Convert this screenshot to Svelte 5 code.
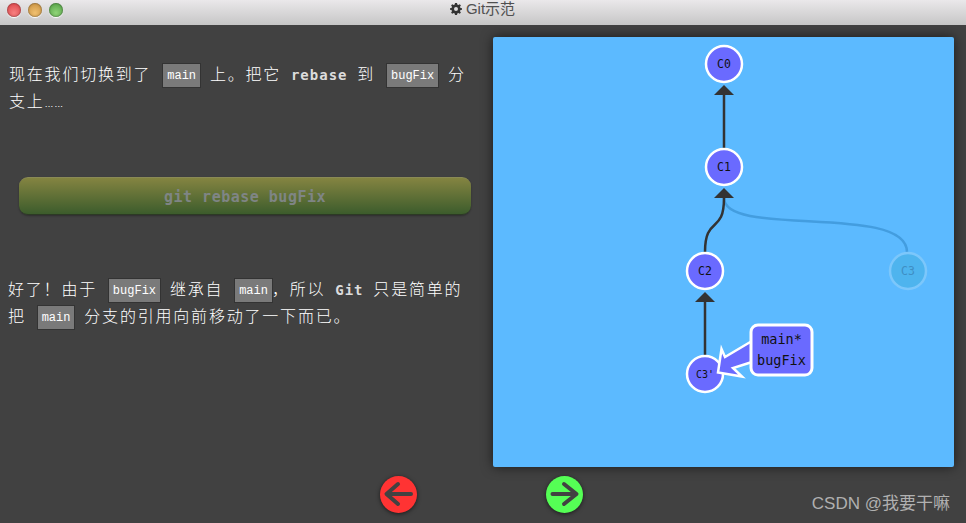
<script>
  const nodes = [
    { id: 'C0', x: 724, y: 64, cls: 'label' },
    { id: 'C1', x: 724, y: 167, cls: 'label' },
    { id: 'C2', x: 705, y: 271, cls: 'label' },
    { id: "C3'", x: 705, y: 374, cls: 'label small' }
  ];
</script>

<div class="window">
  <header class="titlebar">
    <div class="lights">
      <span class="light red"></span>
      <span class="light amber"></span>
      <span class="light green"></span>
    </div>
    <div class="title">
      <svg class="gear" viewBox="0 0 12 12" width="12" height="12" aria-hidden="true">
        <path fill="#333" fill-rule="evenodd" d="M5 0h2l.3 1.6 1.1.5L9.8 1.2l1.1 1.2-.9 1.3.5 1.2 1.5.3v1.6l-1.5.3-.5 1.2.9 1.3-1.1 1.2-1.4-.9-1.1.5L7 12H5l-.3-1.6-1.1-.5-1.4.9-1.1-1.2.9-1.3-.5-1.2L0 6.8V5.2l1.5-.3.5-1.2-.9-1.3 1.1-1.2 1.4.9 1.1-.5zM6 4a2 2 0 1 0 0 4 2 2 0 0 0 0-4z"/>
      </svg>
      <span>Git示范</span>
    </div>
  </header>

  <main class="content">
    <section class="instructions">
      <p class="para first">现在我们切换到了 <code>main</code> 上。把它 <strong>rebase</strong> 到 <code>bugFix</code> 分支上<span class="dots">……</span></p>
      <div class="command">git rebase bugFix</div>
      <p class="para second">好了！由于 <code>bugFix</code> 继承自 <code>main</code>，所以 <strong>Git</strong> 只是简单的把 <code>main</code> 分支的引用向前移动了一下而已。</p>
    </section>

    <section class="canvas">
      <svg viewBox="493 37 461 430" width="461" height="430" role="img" aria-label="Git 提交树">
        <path class="edge" d="M724 95V149" />
        <path class="head" d="M724 85 734 95H714Z" />
        <g class="ghost">
          <path class="edge faded" d="M907 252C907 203 724 238 724 198" />
          <circle class="node" cx="908" cy="271" r="18" />
          <text class="label" x="908" y="275">C3</text>
        </g>
        <path class="edge" d="M705 252C705 215 724 235 724 198" />
        <path class="head" d="M724 188 734 198H714Z" />
        <path class="edge" d="M705 302V356" />
        <path class="head" d="M705 292 715 302H695Z" />
        {#each nodes as n}
          <circle class="node" cx={n.x} cy={n.y} r="18" />
          <text class={n.cls} x={n.x} y={n.y + 4}>{n.id}</text>
        {/each}
        <path class="branch-arrow" d="M752 341 725 357 721.5 349 718 372.5 742 376.5 733 368 752 362Z" />
        <rect class="branch" x="751" y="325" width="61" height="50" rx="7" />
        <text class="branch-text" x="781.5" y="344">main*</text>
        <text class="branch-text" x="781.5" y="365">bugFix</text>
      </svg>
    </section>
  </main>

  <nav class="controls">
    <button class="nav back" aria-label="后退">
      <svg viewBox="0 0 37 37" width="37" height="37"><path d="M31 18H7M18 8 6.500 18 18 28" /></svg>
    </button>
    <button class="nav forward" aria-label="前进">
      <svg viewBox="0 0 37 37" width="37" height="37"><path d="M6.500 18H30M18 8 30.500 18 18 28" /></svg>
    </button>
  </nav>

  <div class="watermark">CSDN @我要干嘛</div>
</div>

<style>
  :global(body) {
    margin: 0;
    background: #414141;
  }
  .window {
    width: 966px;
    height: 523px;
    position: relative;
    overflow: hidden;
    background: #414141;
    display: flex;
    flex-direction: column;
    font-family: "Noto Sans CJK SC", sans-serif;
  }
  .titlebar {
    height: 25px;
    box-sizing: border-box;
    position: relative;
    display: flex;
    align-items: center;
    justify-content: center;
    background: linear-gradient(#eae8ea, #c6c6c6);
    flex: none;
  }
  .lights {
    position: absolute;
    left: 7px;
    top: 3px;
    display: flex;
    gap: 7px;
  }
  .light {
    width: 14px;
    height: 14px;
    border-radius: 50%;
    box-shadow: 0 1px 1px #fff, inset 0 0 2px rgba(0, 0, 0, 0.6);
  }
  .red { background: radial-gradient(circle at 50% 70%, #f78080, #d83c42); }
  .amber { background: radial-gradient(circle at 50% 70%, #f0c070, #c48c3c); }
  .green { background: radial-gradient(circle at 50% 70%, #90d478, #4c9a40); }
  .title {
    display: flex;
    align-items: center;
    gap: 4px;
    margin-left: -1px;
    margin-top: -7px;
    color: #505050;
    font: 15px/18px "Liberation Sans", "Noto Sans CJK SC", sans-serif;
  }
  .content {
    display: flex;
    height: 442px;
    flex: none;
  }
  .instructions {
    width: 493px;
    flex: none;
    box-sizing: border-box;
    padding: 35px 20px 0 9px;
    color: #fff;
  }
  .para {
    margin: 0;
    font-size: 16px;
    font-weight: 300;
    line-height: 27px;
    letter-spacing: 1.8px;
    word-spacing: 4.500px;
  }
  .dots {
    font: 9px "Liberation Sans", sans-serif;
    letter-spacing: 0.6px;
  }
  .para.first { margin-bottom: 63px; }
  .para.second { margin-top: 60px; margin-left: -1px; }
  code {
    display: inline-block;
    box-sizing: border-box;
    height: 25px;
    padding: 0 4px;
    margin: -1px -1px -1px 1px;
    border: 1px solid #333;
    background: #7a7a7a;
    color: #fff;
    font: 12px/24px "Liberation Mono", monospace;
    letter-spacing: 0;
    word-spacing: 0;
    vertical-align: middle;
  }
  strong {
    font: bold 14px "DejaVu Sans Mono", monospace;
    letter-spacing: 1px;
    margin: 0 0 0 0;
    color: #dcdcdc;
  }
  .command {
    margin-left: 10px;
    width: 452px;
    height: 38px;
    box-sizing: border-box;
    border-radius: 9px;
    background: linear-gradient(#848441, #3c5c2c);
    border-top: 1px solid #8a8a55;
    border-bottom: 1px solid #2c3a24;
    box-shadow: 0 1px 2px rgba(0, 0, 0, 0.3);
    color: #7f8585;
    font: bold 15px/39px "DejaVu Sans Mono", monospace;
    letter-spacing: 0.5px;
    text-align: center;
  }
  .canvas {
    width: 461px;
    height: 430px;
    margin-top: 12px;
    flex: none;
    background: #5cbaff;
    border-radius: 2px;
    box-shadow: 0 0 12px rgba(0, 0, 0, 0.6);
  }
  .canvas svg { display: block; }
  .edge {
    fill: none;
    stroke: #333;
    stroke-width: 2.5;
  }
  .edge.faded { stroke: #2a7fc0; opacity: 0.5; }
  .head { fill: #333; }
  .node {
    fill: #6a6aff;
    stroke: #fff;
    stroke-width: 2.5;
  }
  .ghost .node {
    fill: #4eb4ee;
    stroke: #7cc7fb;
  }
  .ghost .label { fill: #3f8fc4; }
  .label {
    font: 11.5px "DejaVu Sans Mono", monospace;
    text-anchor: middle;
    fill: #111;
  }
  .label.small { font-size: 10px; }
  .branch-arrow {
    fill: #6a6aff;
    stroke: #fff;
    stroke-width: 2.5;
  }
  .branch {
    fill: #6a6aff;
    stroke: #fff;
    stroke-width: 3;
  }
  .branch-text {
    font: 13.5px "DejaVu Sans Mono", monospace;
    text-anchor: middle;
    fill: #111;
  }
  .controls {
    flex: 1;
    display: flex;
    align-items: flex-start;
    gap: 129px;
    padding: 9px 0 0 380px;
  }
  .nav {
    width: 37px;
    height: 37px;
    padding: 0;
    border: 0;
    border-radius: 50%;
    box-shadow: 0 1px 4px rgba(0, 0, 0, 0.6);
    display: block;
  }
  .back { background: #ff3333; }
  .forward { background: #55ff55; }
  .nav svg { display: block; }
  .nav path {
    fill: none;
    stroke: #424242;
    stroke-width: 4;
    stroke-linecap: round;
    stroke-linejoin: round;
  }
  .watermark {
    position: absolute;
    right: 16px;
    bottom: 9px;
    color: #b0b0b0;
    font: 17px/20px "Liberation Sans", "Noto Sans CJK SC", sans-serif;
  }
</style>
